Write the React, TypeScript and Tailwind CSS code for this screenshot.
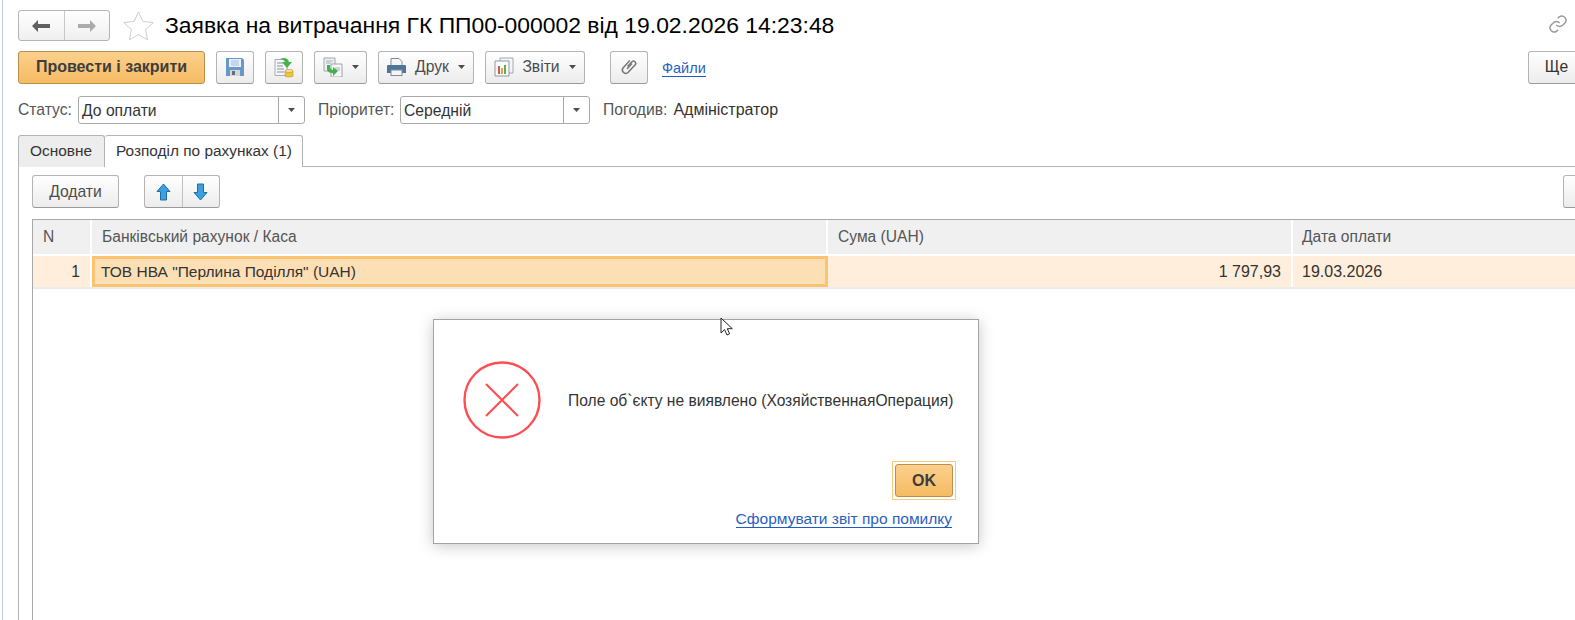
import React, { ReactNode } from 'react';

const btn =
  'flex items-center h-[33px] shrink-0 rounded-[3px] border border-[#b4b4b4] border-b-[#9a9a9a] bg-gradient-to-b from-white to-[#ececec] text-[#4b4b4b]';

const Caret = () => (
  <svg width="7" height="4" viewBox="0 0 7 4" className="shrink-0">
    <path d="M0 0h7L3.5 4z" fill="#4d4d4d" />
  </svg>
);

const Combo = ({ value, width }: { value: string; width: string }) => (
  <div className={`flex h-[28px] shrink-0 rounded-[3px] border border-[#a9a9a9] bg-white ${width}`}>
    <div className="flex-1 pl-[3px] leading-[27px] text-[#333333]">{value}</div>
    <div className="flex w-[26px] items-center justify-center border-l border-[#a9a9a9]">
      <Caret />
    </div>
  </div>
);

const ToolButton = ({ children, width, className = '' }: { children: ReactNode; width: string; className?: string }) => (
  <div className={`${btn} ${width} ${className} justify-center`}>{children}</div>
);

const SaveIcon = () => (
  <svg width="18" height="18" viewBox="0 0 18 18">
    <path d="M0 0h16l2 2v16H0z" fill="#6a97c9" />
    <rect x="3" y="1" width="12" height="8" fill="#e9f1f8" />
    <path d="M5 3h8M5 5h8M5 7h8" stroke="#9dbcdb" />
    <rect x="4" y="12" width="10" height="6" fill="#d5d5d5" />
    <rect x="6" y="13" width="3" height="4" fill="#5f6f80" />
  </svg>
);

const PostIcon = () => (
  <svg width="20" height="21" viewBox="0 0 20 21">
    <path d="M1 2.5h12v16H1z" fill="#f4f6f8" stroke="#a8adb3" />
    <path d="M3 6h6M3 9h6M3 12h7M3 15h7" stroke="#8c939b" />
    <path d="M6 2c4-2 8-1 9 3h3l-5 6-5-6h3c-1-2-3-3-5-3z" fill="#46b34a" />
    <path d="M11 14v5c0 1.300 8 1.300 8 0v-5z" fill="#ecc63e" stroke="#b8962a" strokeWidth=".6" />
    <ellipse cx="15" cy="14" rx="4" ry="1.600" fill="#f6e08a" stroke="#b8962a" strokeWidth=".6" />
  </svg>
);

const RelatedIcon = () => (
  <svg width="20" height="20" viewBox="0 0 20 20">
    <path d="M1 1h11v13H1z" fill="#eef1f4" stroke="#9ea5ad" />
    <path d="M8 7h11v13H8z" fill="#f6f7f9" stroke="#9ea5ad" />
    <path d="M3 4h7M3 6h5M12 11h5M12 13h5" stroke="#a9b0b8" />
    <path d="M4 8v4c0 3 3 4 6 4v3l5-5-5-4v3c-1 0-3-1-3-3V8z" fill="#42b14a" />
  </svg>
);

const PrintIcon = () => (
  <svg width="19" height="18" viewBox="0 0 19 18">
    <path d="M4 .5h8l3 3v5H4z" fill="#f3f5f7" stroke="#7f8b97" />
    <path d="M1 7h17a1 1 0 0 1 1 1v7H0V8a1 1 0 0 1 1-1z" fill="#4d7499" />
    <rect x="4" y="12" width="11" height="5.500" fill="#f3f5f7" stroke="#7f8b97" />
  </svg>
);

const ReportIcon = () => (
  <svg width="20" height="20" viewBox="0 0 20 20">
    <path d="M6 1h13v15H6z" fill="#f3f5f7" stroke="#a2aab2" />
    <path d="M1 4h14v15H1z" fill="#fbfbfb" stroke="#8f98a1" />
    <rect x="4" y="9" width="2" height="8" fill="#d9534f" />
    <rect x="7" y="11" width="2" height="6" fill="#e3a33b" />
    <rect x="10" y="8" width="2" height="9" fill="#58ad57" />
  </svg>
);

const ClipIcon = () => (
  <svg width="18" height="18" viewBox="0 0 18 18" fill="none" stroke="#777777" strokeWidth="1.500">
    <path d="M6.500 8.500l4.500-4.800a2.200 2.200 0 0 1 3.200 3l-7 7.600a3.400 3.400 0 0 1-5-4.600l6.600-7.200" transform="translate(1 0)" />
    <path d="M7 11l5-5.400" />
  </svg>
);

const ArrowUp = () => (
  <svg width="15" height="18" viewBox="0 0 15 18">
    <path d="M7.500 1L14 8.500h-3.500V17h-6V8.500H1z" fill="#3d9fe0" stroke="#1c6ea8" />
  </svg>
);

const ArrowDown = () => (
  <svg width="15" height="18" viewBox="0 0 15 18">
    <path d="M7.500 17L14 9.500h-3.500V1h-6v8.500H1z" fill="#3d9fe0" stroke="#1c6ea8" />
  </svg>
);

const Cursor = () => (
  <svg width="14" height="20" viewBox="0 0 14 20" className="absolute left-[720px] top-[317px]">
    <path d="M1 1v15l3.600-3.400L7 18l2.600-1.200-2.300-5.100h5z" fill="#ffffff" stroke="#222222" />
  </svg>
);

const ErrorDialog = () => (
  <div className="absolute left-[433px] top-[319px] flex h-[225px] w-[546px] flex-col border border-[#a3a3a3] bg-white shadow-[0_2px_14px_rgba(0,0,0,0.22)]">
    <div className="flex items-center pl-[29px] pt-[41px]">
      <svg width="78" height="78" viewBox="0 0 78 78" className="shrink-0">
        <circle cx="39" cy="39" r="37.500" fill="none" stroke="#fb4f53" strokeWidth="2.400" />
        <path d="M23 23l32 32M55 23L23 55" stroke="#fb4f53" strokeWidth="2" />
      </svg>
      <div className="ml-[27px] mt-[2px] whitespace-nowrap text-[15.600px] text-[#333333]">Поле об`єкту не виявлено (ХозяйственнаяОперация)</div>
    </div>
    <div className="mr-[22px] mt-[22px] self-end border border-[#fbc779] p-[2px]">
      <div className="flex h-[33px] w-[58px] items-center justify-center rounded-[3px] border border-[#b98f4f] bg-gradient-to-b from-[#fbd08c] to-[#f6bb62] text-[16px] font-bold text-[#3d3d3d]">
        OK
      </div>
    </div>
    <a className="mr-[26px] mt-[10px] self-end whitespace-nowrap border-b border-[#1c5dbf] text-[15.500px] leading-[17px] text-[#2a5fc0]">
      Сформувати звіт про помилку
    </a>
  </div>
);

export default function App() {
  return (
    <div className="relative h-[620px] w-[1575px] overflow-hidden bg-white pl-[18px] font-['Liberation_Sans',sans-serif] text-[15.700px] text-[#333333]">
      {/* left edge of the window */}
      <div className="absolute bottom-0 left-[2px] top-0 w-px bg-[#c5cbd3]" />

      {/* Title */}
      <div className="flex h-[50px] items-start pt-[10px]">
        <div className="flex h-[31px] w-[92px] rounded-[3px] border border-[#b4b4b4] bg-gradient-to-b from-white to-[#efefef]">
          <div className="flex flex-1 items-center justify-center border-r border-[#c8c8c8]">
            <svg width="18" height="12" viewBox="0 0 18 12"><path d="M6 0v4h12v4H6v4L0 6z" fill="#5f5f5f" /></svg>
          </div>
          <div className="flex flex-1 items-center justify-center">
            <svg width="18" height="12" viewBox="0 0 18 12"><path d="M12 0v4H0v4h12v4l6-6z" fill="#ababab" /></svg>
          </div>
        </div>
        <svg width="31" height="29" viewBox="0 0 31 29" className="ml-[13px] mt-px">
          <path d="M15.500 1l4.400 9.400 10.300 1.200-7.600 7 2 10.200-9.100-5.100-9.100 5.100 2-10.200-7.600-7 10.300-1.200z" fill="#ffffff" stroke="#c9cdd1" />
        </svg>
        <div className="ml-[11px] whitespace-nowrap text-[22.900px] leading-[30px] text-black">
          Заявка на витрачання ГК ПП00-000002 від 19.02.2026 14:23:48
        </div>
        <svg width="20" height="20" viewBox="0 0 24 24" fill="none" stroke="#9b9b9b" strokeWidth="1.800" className="absolute left-[1548px] top-[14px]">
          <path d="M10 13a5 5 0 0 0 7.500.5l3-3a5 5 0 0 0-7-7l-1.700 1.700" />
          <path d="M14 11a5 5 0 0 0-7.500-.5l-3 3a5 5 0 0 0 7 7l1.700-1.700" />
        </svg>
      </div>

      {/* Command bar */}
      <div className="flex h-[34px] items-center">
        <div className="flex h-[33px] w-[187px] shrink-0 items-center justify-center rounded-[3px] border border-[#b98f4f] bg-gradient-to-b from-[#fbd08c] to-[#f6bb62] text-[16px] font-bold text-[#3d3d3d]">
          Провести і закрити
        </div>
        <ToolButton width="w-[38px]" className="ml-[11px]"><SaveIcon /></ToolButton>
        <ToolButton width="w-[38px]" className="ml-[11px]"><PostIcon /></ToolButton>
        <ToolButton width="w-[53px]" className="ml-[11px] gap-[9px]"><RelatedIcon /><Caret /></ToolButton>
        <ToolButton width="w-[96px]" className="ml-[11px]">
          <PrintIcon /><span className="ml-[9px] mr-[9px]">Друк</span><Caret />
        </ToolButton>
        <ToolButton width="w-[100px]" className="ml-[11px]">
          <ReportIcon /><span className="ml-[8px] mr-[9px]">Звіти</span><Caret />
        </ToolButton>
        <ToolButton width="w-[38px]" className="ml-[25px]"><ClipIcon /></ToolButton>
        <a className="ml-[14px] mt-[2px] border-b border-[#1c5dbf] text-[14.500px] leading-[16px] text-[#2a5fc0]">Файли</a>
        <div className={`${btn} ml-[822px] w-[60px] pl-[16px] text-[#333333]`}>Ще</div>
      </div>

      {/* Status row */}
      <div className="mt-[12px] flex h-[28px] items-center">
        <span className="w-[60px] text-[#555555]">Статус:</span>
        <Combo value="До оплати" width="w-[227px]" />
        <span className="ml-[13px] w-[82px] text-[#555555]">Пріоритет:</span>
        <Combo value="Середній" width="w-[190px]" />
        <span className="ml-[13px] text-[#555555]">Погодив:</span>
        <span className="ml-[6px] text-[16px]">Адміністратор</span>
      </div>

      {/* Tabs */}
      <div className="mt-[11px] flex h-[32px] text-[15.400px]">
        <div className="w-[87px] rounded-t-[3px] border border-b-0 border-[#b4b4b4] bg-[#ededed] pl-[11px] leading-[29px]">Основне</div>
        <div className="z-10 h-[32px] w-[198px] rounded-t-[3px] border border-b-0 border-l-0 border-[#b4b4b4] bg-white pl-[11px] leading-[29px]">Розподіл по рахунках (1)</div>
      </div>

      {/* Tab panel */}
      <div className="-mt-px h-[460px] border-l border-t border-[#b4b4b4] pl-[13px]">
        <div className="flex items-center pt-[8px]">
          <ToolButton width="w-[87px]">Додати</ToolButton>
          <div className="ml-[25px] flex h-[33px] w-[76px] shrink-0 rounded-[3px] border border-[#b4b4b4] border-b-[#9a9a9a] bg-gradient-to-b from-white to-[#ececec]">
            <div className="flex flex-1 items-center justify-center border-r border-[#c0c0c0]"><ArrowUp /></div>
            <div className="flex flex-1 items-center justify-center"><ArrowDown /></div>
          </div>
          <div className={`${btn} ml-[1343px] w-[30px]`} />
        </div>

        {/* Table */}
        <div className="mt-[11px] h-[420px] border-l border-t border-[#a9a9a9]">
          <div className="flex h-[36px] border-b-2 border-white bg-[#f0f0f0] text-[15.600px] leading-[33px] text-[#555555]">
            <div className="w-[59px] shrink-0 border-r-2 border-white pl-[10px]">N</div>
            <div className="w-[736px] shrink-0 border-r-2 border-white pl-[10px]">Банківський рахунок / Каса</div>
            <div className="w-[465px] shrink-0 border-r-2 border-white pl-[10px]">Сума (UAH)</div>
            <div className="flex-1 pl-[9px]">Дата оплати</div>
          </div>
          <div className="flex h-[33px] border-b-2 border-[#ebebeb] bg-[#ffeedc] leading-[31px]">
            <div className="w-[59px] shrink-0 border-r-2 border-white pr-[10px] text-right">1</div>
            <div className="w-[736px] shrink-0 border-[3px] border-[#fbc272] bg-[#fddfb5] pl-[6px] text-[15.500px] leading-[25px]">ТОВ НВА "Перлина Поділля" (UAH)</div>
            <div className="w-[465px] shrink-0 border-r-2 border-white pr-[10px] text-right text-[16px]">1 797,93</div>
            <div className="flex-1 pl-[9px] text-[16px]">19.03.2026</div>
          </div>
        </div>
      </div>

      <ErrorDialog />
      <Cursor />
    </div>
  );
}
